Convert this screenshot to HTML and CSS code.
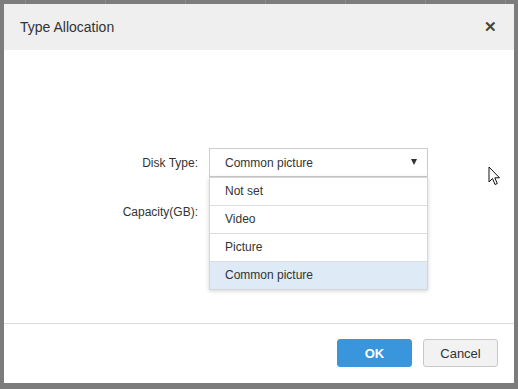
FILE: index.html
```html
<!DOCTYPE html>
<html lang="en">
<head>
  <meta charset="UTF-8">
  <title>Type Allocation</title>
  <link rel="stylesheet" href="styles.css">
</head>
<body>
  <div class="backdrop">
    <div class="grid-lines">
      <span></span><span></span><span></span><span></span><span></span><span></span><span></span>
    </div>
    <div class="dialog">
      <div class="dialog-header">
        <span class="dialog-title">Type Allocation</span>
        <span class="close">&#x2715;</span>
      </div>
      <div class="dialog-body">
        <div class="form">
          <div class="form-row">
            <label class="form-label">Disk Type:</label>
            <div class="select">
              <span class="select-text">Common picture</span>
              <span class="select-arrow"></span>
              <ul class="dropdown">
                <li>Not set</li>
                <li>Video</li>
                <li>Picture</li>
                <li class="active">Common picture</li>
              </ul>
            </div>
          </div>
          <div class="form-row">
            <label class="form-label">Capacity(GB):</label>
            <div class="input"></div>
          </div>
        </div>
      </div>
      <div class="dialog-footer">
        <button class="btn btn-primary">OK</button>
        <button class="btn btn-default">Cancel</button>
      </div>
    </div>
    <!-- mouse pointer -->
    <svg class="cursor" width="14" height="21" viewBox="0 0 14 21">
      <path d="M1 1 L1 16 L4.5 12.5 L7 18.5 L9.3 17.5 L6.8 11.8 L11.5 11.8 Z" fill="#fff" stroke="#111" stroke-width="1" stroke-linejoin="round"/>
    </svg>
  </div>
</body>
</html>
```

FILE: styles.css
```css
html, body {
  margin: 0;
  padding: 0;
}
body {
  font-family: 'Liberation Sans', Arial, sans-serif;
  font-size: 12px;
  color: #333;
  background: #7c7c7c;
}
.backdrop {
  position: relative;
  width: 518px;
  height: 389px;
  padding: 4px;
  box-sizing: border-box;
  overflow: hidden;
}
.grid-lines {
  position: absolute;
  top: 0;
  left: 25px;
  right: 0;
  height: 4px;
  display: flex;
  gap: 79px;
}
.grid-lines span {
  width: 1px;
  height: 4px;
  background: #8c8c8c;
}
.dialog {
  position: relative;
  width: 510px;
  height: 379px;
  background: #fff;
  display: flex;
  flex-direction: column;
}
.dialog-header {
  height: 46px;
  background: #efefef;
  display: flex;
  align-items: center;
  justify-content: space-between;
  padding: 0 17px 0 16px;
}
.dialog-title {
  font-size: 14px;
  color: #333;
}
.close {
  font-size: 15px;
  font-weight: bold;
  color: #444;
}
.dialog-body {
  height: 274px;
  border-bottom: 1px solid #dcdcdc;
  box-sizing: border-box;
}
.form {
  padding-top: 98px;
  display: flex;
  flex-direction: column;
  gap: 20px;
}
.form-row {
  display: flex;
  align-items: center;
  gap: 11px;
}
.form-label {
  width: 194px;
  text-align: right;
}
.select {
  position: relative;
  width: 219px;
  height: 29px;
  border: 1px solid #ccc;
  box-sizing: border-box;
  display: flex;
  align-items: center;
  justify-content: space-between;
  padding: 0 10px 0 15px;
}
.select-arrow {
  width: 0;
  height: 0;
  border-left: 3.5px solid transparent;
  border-right: 3.5px solid transparent;
  border-top: 6px solid #333;
  margin-top: -2px;
}
.dropdown {
  position: absolute;
  top: 28px;
  left: -1px;
  width: 219px;
  margin: 0;
  padding: 0;
  list-style: none;
  background: #fff;
  border: 1px solid #d6d6d6;
  box-sizing: border-box;
  box-shadow: 0 1px 4px rgba(0,0,0,0.18);
}
.dropdown li {
  height: 27px;
  line-height: 27px;
  padding-left: 15px;
  border-bottom: 1px solid #ddd;
}
.dropdown li:last-child { border-bottom: none; }
.dropdown li.active { background: #deeaf5; }
.input {
  width: 219px;
  height: 29px;
  border: 1px solid #ccc;
  box-sizing: border-box;
}
.dialog-footer {
  flex: 1;
  display: flex;
  justify-content: flex-end;
  align-items: flex-start;
  gap: 11px;
  padding: 15px 16px 0 0;
}
.btn {
  width: 75px;
  height: 28px;
  border-radius: 3px;
  font-family: 'Liberation Sans', Arial, sans-serif;
  font-size: 13px;
  cursor: pointer;
}
.btn-primary {
  background: #3996dc;
  border: 1px solid #3996dc;
  color: #fff;
  font-weight: bold;
}
.btn-default {
  background: #f2f2f2;
  border: 1px solid #c8c8c8;
  color: #333;
}
.cursor {
  position: absolute;
  left: 488px;
  top: 166px;
}
```
